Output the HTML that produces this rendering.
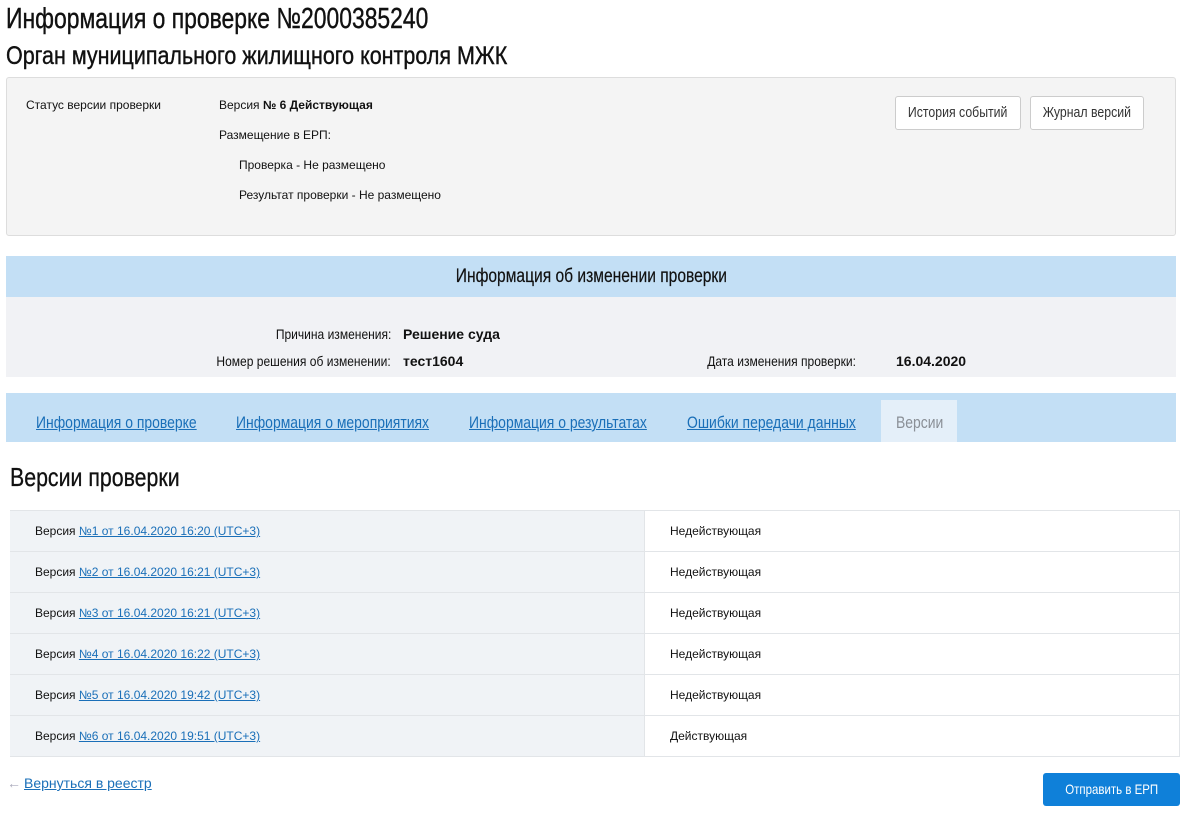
<!DOCTYPE html>
<html><head><meta charset="utf-8"><style>
body{margin:0;width:1204px;height:822px;position:relative;background:#fff;font-family:"Liberation Sans",sans-serif;color:#111;overflow:hidden}
.a{position:absolute;white-space:nowrap}
.c{display:inline-block;transform:scaleX(.82);transform-origin:0 0}
.cr{display:inline-block;transform:scaleX(.86);transform-origin:100% 0}
.cc{display:inline-block;transform:scaleX(.82);transform-origin:50% 0}
a{color:#1a6fb8;text-decoration:underline}
.btn{position:absolute;background:#fff;border:1px solid #ccc;border-radius:3px;height:32px;line-height:32px;text-align:center;font-size:15px;color:#333}
.row{position:absolute;left:10px;width:1169px;height:40px;border-top:1px solid #e2e5e8}
.row .l{position:absolute;left:0;top:0;width:634px;height:40px;background:#f0f3f6;border-right:1px solid #e2e5e8}
.row .l span.t{position:absolute;left:25px;top:13px;font-size:12px}
.row .r{position:absolute;left:660px;top:13px;font-size:12px}
</style></head><body>
<div class="a" style="left:6px;top:3px;font-size:29px;-webkit-text-stroke:.4px #111"><span class="c" style="transform:scaleX(.79)">Информация о проверке №2000385240</span></div>
<div class="a" style="left:6px;top:42px;font-size:25px;-webkit-text-stroke:.4px #111"><span class="c" style="transform:scaleX(.86)">Орган муниципального жилищного контроля МЖК</span></div>

<div class="a" style="left:6px;top:77px;width:1168px;height:157px;background:#f4f4f4;border:1px solid #ddd;border-radius:3px"></div>
<div class="a" style="left:26px;top:98px;font-size:12px">Статус версии проверки</div>
<div class="a" style="left:219px;top:98px;font-size:12px">Версия <b>№ 6 Действующая</b></div>
<div class="a" style="left:219px;top:128px;font-size:12px">Размещение в ЕРП:</div>
<div class="a" style="left:239px;top:158px;font-size:12px">Проверка - Не размещено</div>
<div class="a" style="left:239px;top:188px;font-size:12px">Результат проверки - Не размещено</div>
<div class="btn" style="left:895px;top:96px;width:124px"><span class="cc">История событий</span></div>
<div class="btn" style="left:1030px;top:96px;width:112px"><span class="cc">Журнал версий</span></div>

<div class="a" style="left:6px;top:256px;width:1170px;height:41px;background:#c3dff5;text-align:center;line-height:41px;font-size:19px;-webkit-text-stroke:.2px #111"><span class="cc">Информация об изменении проверки</span></div>
<div class="a" style="left:6px;top:297px;width:1170px;height:80px;background:#f1f2f5"></div>
<div class="a" style="left:191px;top:326px;width:200px;text-align:right;font-size:14px"><span class="cr">Причина изменения:</span></div>
<div class="a" style="left:403px;top:326px;font-size:14px;font-weight:bold">Решение суда</div>
<div class="a" style="left:141px;top:353px;width:250px;text-align:right;font-size:14px"><span class="cr">Номер решения об изменении:</span></div>
<div class="a" style="left:403px;top:353px;font-size:14px;font-weight:bold">тест1604</div>
<div class="a" style="left:606px;top:353px;width:250px;text-align:right;font-size:14px"><span class="cr">Дата изменения проверки:</span></div>
<div class="a" style="left:896px;top:353px;font-size:14px;font-weight:bold">16.04.2020</div>

<div class="a" style="left:6px;top:393px;width:1170px;height:49px;background:#c3dff5"></div>
<div class="a" style="left:881px;top:400px;width:76px;height:42px;background:#e4eff9"></div>
<div class="a" style="left:36px;top:413px;font-size:17px"><a class="c">Информация о проверке</a></div>
<div class="a" style="left:236px;top:413px;font-size:17px"><a class="c">Информация о мероприятиях</a></div>
<div class="a" style="left:469px;top:413px;font-size:17px"><a class="c">Информация о результатах</a></div>
<div class="a" style="left:687px;top:413px;font-size:17px"><a class="c">Ошибки передачи данных</a></div>
<div class="a" style="left:896px;top:413px;font-size:17px;color:#8a8f96"><span class="c">Версии</span></div>

<div class="a" style="left:10px;top:462px;font-size:26px;-webkit-text-stroke:.3px #111"><span class="c">Версии проверки</span></div>

<div class="row" style="top:510px"><div class="l"><span class="t">Версия <a>№1 от 16.04.2020 16:20 (UTC+3)</a></span></div><span class="r">Недействующая</span></div>
<div class="row" style="top:551px"><div class="l"><span class="t">Версия <a>№2 от 16.04.2020 16:21 (UTC+3)</a></span></div><span class="r">Недействующая</span></div>
<div class="row" style="top:592px"><div class="l"><span class="t">Версия <a>№3 от 16.04.2020 16:21 (UTC+3)</a></span></div><span class="r">Недействующая</span></div>
<div class="row" style="top:633px"><div class="l"><span class="t">Версия <a>№4 от 16.04.2020 16:22 (UTC+3)</a></span></div><span class="r">Недействующая</span></div>
<div class="row" style="top:674px"><div class="l"><span class="t">Версия <a>№5 от 16.04.2020 19:42 (UTC+3)</a></span></div><span class="r">Недействующая</span></div>
<div class="row" style="top:715px;border-bottom:1px solid #e2e5e8"><div class="l"><span class="t">Версия <a>№6 от 16.04.2020 19:51 (UTC+3)</a></span></div><span class="r">Действующая</span></div>
<div class="a" style="left:1179px;top:510px;width:1px;height:247px;background:#e2e5e8"></div>

<div class="a" style="left:7px;top:775px;font-size:14px"><span style="color:#aab">←</span><a style="margin-left:3px">Вернуться в реестр</a></div>
<div class="a" style="left:1043px;top:773px;width:137px;height:33px;background:#0f80d9;border-radius:3px;color:#fff;text-align:center;line-height:33px;font-size:14px"><span class="cc">Отправить в ЕРП</span></div>
</body></html>
